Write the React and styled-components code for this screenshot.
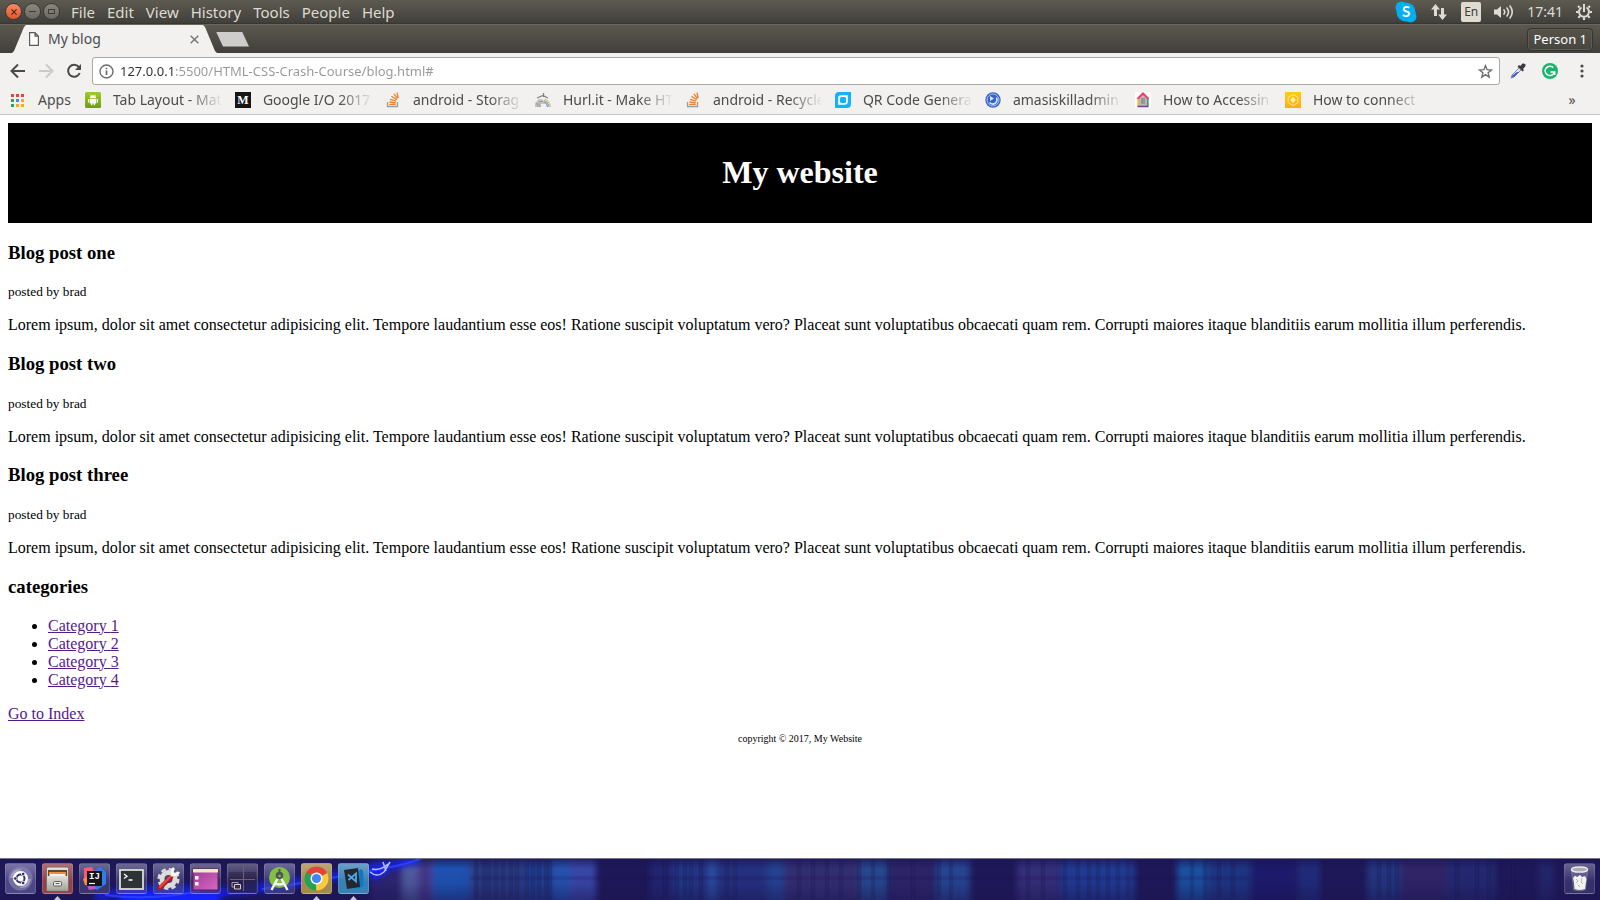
import React from "react";
import styled, { createGlobalStyle } from "styled-components";

const GlobalStyle = createGlobalStyle`
  body { margin: 0; background: #fff; }
  button { font: inherit; color: inherit; background: none; border: 0; padding: 0; margin: 0; display: flex; align-items: center; justify-content: center; }
  svg { display: block; flex: none; }
`;

const uiFont = `"Noto Sans", "Open Sans", sans-serif`;

const Desktop = styled.div`
  min-height: 100vh;
  display: flex;
  flex-direction: column;
`;

/* ---------- system bar ---------- */
const SystemBar = styled.header`
  display: flex;
  align-items: center;
  justify-content: space-between;
  box-sizing: border-box;
  height: 24px;
  padding: 0 8px 0 5px;
  background: linear-gradient(#5d5b50, #413f3b);
  border-bottom: 1px solid #37362f;
  font: 14px/22px ${uiFont};
  color: #dfdbd2;
`;

const Cluster = styled.div`
  display: flex;
  align-items: center;
  gap: ${(p) => p.$gap}px;
`;

const WindowButton = styled.button`
  width: 17px;
  height: 17px;
  box-sizing: border-box;
  border: 1px solid #3a3934;
  border-radius: 50%;
  background: ${(p) => (p.$close ? "linear-gradient(#f58b67, #e2562b)" : "linear-gradient(#8b887e, #6b6961)")};
`;

const Menu = styled.nav`
  display: flex;
  gap: 12px;
  padding-left: 9px;
  font-size: 15px;
  line-height: 20px;
`;

const Language = styled.button`
  width: 20px;
  height: 20px;
  border-radius: 2px;
  background: #dfdbd2;
  color: #3c3b37;
  font-size: 12px;
`;

/* ---------- tab strip ---------- */
const TabStrip = styled.div`
  display: flex;
  align-items: flex-end;
  box-sizing: border-box;
  height: 29px;
  padding: 0 7px 0 12px;
  background: linear-gradient(#5b584e, #413f3b);
  border-top: 1px solid #69665b;
  font-family: ${uiFont};
`;

const Tab = styled.div`
  display: flex;
  align-items: center;
  box-sizing: border-box;
  width: 205px;
  height: 28px;
  padding: 0 18px 0 17px;
  gap: 9px;
  background: #f2f1f0;
  clip-path: polygon(0 100%, 2px 26px, 12px 2px, 14px 0, 191px 0, 193px 2px, 203px 26px, 100% 100%);
  font-size: 14px;
  line-height: 28px;
  color: #4c4c4c;
`;

const TabTitle = styled.span`
  flex: 1;
`;

const NewTab = styled.button`
  align-self: center;
  width: 33px;
  height: 15px;
  margin: 0 auto 0 -1px;
  background: #cfcdcb;
  clip-path: polygon(0 0, 26px 0, 100% 100%, 7px 100%);
`;

const Profile = styled.button`
  align-self: center;
  box-sizing: border-box;
  height: 23px;
  padding: 0 5px;
  border: 1px solid #35342f;
  border-radius: 4px;
  background: linear-gradient(#56534a, #474540);
  box-shadow: inset 0 0 0 1px #5d5b52;
  font-size: 13px;
  color: #fff;
`;

/* ---------- toolbar and bookmarks ---------- */
const Chrome = styled.div`
  background: #f2f1f0;
  border-bottom: 1px solid #c9c8c7;
  font: 14px/22px ${uiFont};
  color: #4c4c4c;
`;

const Toolbar = styled.div`
  display: flex;
  align-items: center;
  height: 36px;
  padding: 0 10px;
`;

const AddressBox = styled.label`
  flex: 1;
  display: flex;
  align-items: center;
  box-sizing: border-box;
  height: 28px;
  margin: 0 10px;
  padding: 0 6px;
  gap: 6px;
  border: 1px solid #a9a8a7;
  border-radius: 3px;
  background: #fff;
`;

const Address = styled.input`
  flex: 1;
  min-width: 0;
  height: 22px;
  padding: 0;
  border: 0;
  outline: 0;
  font: 13px/22px ${uiFont};
  color: transparent;
  background: linear-gradient(90deg, #2e2e2e 56px, #979797 56px);
  background-clip: text;
`;

const Bookmarks = styled.nav`
  display: flex;
  align-items: center;
  gap: 12px;
  height: 22px;
  padding: 0 20px 3px 10px;
`;

const Bookmark = styled.a`
  display: flex;
  align-items: center;
  gap: 12px;
  color: inherit;
  text-decoration: none;
`;

const AppsLink = styled(Bookmark)`
  gap: 13px;
  margin-right: 2px;
`;

const BookmarkLabel = styled.span`
  width: 110px;
  overflow: hidden;
  white-space: nowrap;
  mask-image: linear-gradient(90deg, #000 76px, transparent 110px);
`;

const Overflow = styled.button`
  margin-left: auto;
  width: 16px;
`;

/* ---------- web page ---------- */
const Page = styled.main`
  flex: 1;
  padding: 8px;
  font-family: "Liberation Serif", serif;
  font-size: 16px;
  color: #000;
  a { color: #551a8b; }
`;

const Banner = styled.div`
  padding: 10px;
  background: #000;
  color: #fff;
  text-align: center;
  display: flow-root;
`;

const Copyright = styled.p`
  margin: 10px 0;
  font-size: 10px;
  text-align: center;
`;

/* ---------- dock ---------- */
const Dock = styled.footer`
  position: relative;
  display: flex;
  align-items: center;
  box-sizing: border-box;
  height: 42px;
  padding: 0 5px 2px;
  gap: 6px;
  border-top: 1px solid #77758c;
  background: #1e1958;
  overflow: hidden;
`;

const Wallpaper = styled.svg`
  position: absolute;
  inset: 0;
  width: 100%;
  height: 100%;
`;

const Launcher = styled.button`
  position: relative;
  width: 31px;
  height: 31px;
  margin-left: ${(p) => (p.$last ? "auto" : 0)};
  box-sizing: border-box;
  border-radius: 3px;
  border: 1px solid rgba(255, 255, 255, 0.14);
  background: linear-gradient(rgba(255, 255, 255, 0.25), transparent 60%), ${(p) => p.$tint};
`;

const RunningMark = styled.span`
  position: absolute;
  bottom: -7px;
  left: 11px;
  width: 7px;
  height: 4px;
  background: #c9c7d4;
  clip-path: polygon(50% 0, 100% 100%, 0 100%);
`;

/* ---------- icons ---------- */
const Skype = () => (
  <svg width="22" height="22" viewBox="0 0 22 22">
    <circle cx="6.500" cy="6.500" r="6" fill="#00aff0" />
    <circle cx="15.500" cy="15.500" r="6" fill="#00aff0" />
    <circle cx="11" cy="11" r="9.500" fill="#00aff0" />
    <text x="11" y="16" fontSize="15" fontWeight="700" textAnchor="middle" fill="#fff" fontFamily="Lato, sans-serif">S</text>
  </svg>
);
const Network = () => (
  <svg width="18" height="18" viewBox="0 0 18 18" fill="#dfdbd2">
    <path d="M5.500 1L10 6.500H7V13H4V6.500H1zM12.500 17L8 11.500H11V5H14V11.500H17z" />
  </svg>
);
const Sound = () => (
  <svg width="20" height="16" viewBox="0 0 20 16" fill="none" stroke="#dfdbd2" strokeWidth="1.600" strokeLinecap="round">
    <path d="M0 5.500H3L7 2V14L3 10.500H0z" fill="#dfdbd2" stroke="none" />
    <path d="M10 6Q11.500 8 10 10M13 4Q16 8 13 12M16 2Q20.500 8 16 14" />
  </svg>
);
const Gear = () => (
  <svg width="16" height="18" viewBox="0 0 16 18" fill="none" stroke="#dfdbd2">
    <path d="M5.500 4.500A5 5 0 1 0 10.500 4.500" strokeWidth="2" />
    <path d="M8 1V9" strokeWidth="2" />
    <path d="M3.600 4.500L2 3M12.400 4.500L14 3M2.500 9H0M13.500 9H16M4 13L2.300 14.700M12 13L13.700 14.700M8 14.500V17" strokeWidth="2.200" />
  </svg>
);
const FileIcon = () => (
  <svg width="10" height="14" viewBox="0 0 10 14" fill="#fff" stroke="#5a5a5a" strokeWidth="1.200">
    <path d="M.6.6H6L9.400 4.200V13.400H.6zM6 .6V4.200H9.400" />
  </svg>
);
const Cross = ({ size, color, w }) => (
  <svg width={size} height={size} viewBox="0 0 8 8" stroke={color} strokeWidth={w}>
    <path d="M.6.6L7.400 7.400M7.400.6L.6 7.400" />
  </svg>
);
const Arrow = ({ color, flip }) => (
  <svg width="16" height="16" viewBox="0 0 16 16" fill="none" stroke={color} strokeWidth="2">
    <path d={flip ? "M1 8H14M8 1.500L14.500 8L8 14.500" : "M15 8H2M8 1.500L1.500 8L8 14.500"} />
  </svg>
);
const Reload = () => (
  <svg width="16" height="16" viewBox="0 0 16 16">
    <path d="M12.800 4A6 6 0 1 0 13.700 10" fill="none" stroke="#4a4a4a" strokeWidth="2" />
    <path d="M15 1V7H9z" fill="#4a4a4a" />
  </svg>
);
const Info = () => (
  <svg width="15" height="15" viewBox="0 0 15 15" fill="none" stroke="#6c6c6c">
    <circle cx="7.500" cy="7.500" r="6.500" strokeWidth="1.400" />
    <path d="M7.500 6.500V11M7.500 3.700V5.300" strokeWidth="1.700" />
  </svg>
);
const Star = () => (
  <svg width="15" height="15" viewBox="0 0 15 15" fill="none" stroke="#6c6c6c" strokeWidth="1.400">
    <path d="M7.500 1.700L9.100 5.700L13.500 6L10.100 8.800L11.200 13.100L7.500 10.700L3.800 13.100L4.900 8.800L1.500 6L5.900 5.700z" />
  </svg>
);
const Dropper = () => (
  <svg width="16" height="16" viewBox="0 0 16 16">
    <path d="M9.500 4.500L11.500 6.500L4 14L1 15L2 12z" fill="#dfe6f7" stroke="#6c7284" strokeWidth=".8" />
    <path d="M7 9L9 9L4 13.700L1.700 14.300L2.500 12.500z" fill="#3157e0" />
    <path d="M7.500 3.500L9 2L10.200 3L12.500.6Q14 0 15.300 1.200Q16 2.500 15 3.700L13 6L14 7.200L12.500 8.500z" fill="#3b3a40" />
  </svg>
);
const Grammarly = () => (
  <svg width="16" height="16" viewBox="0 0 16 16">
    <circle cx="8" cy="8" r="8" fill="#1cb46c" />
    <path d="M11.300 4.600A4.700 4.700 0 1 0 12.300 9.500M12.700 12V9H8.500" fill="none" stroke="#fff" strokeWidth="1.500" />
  </svg>
);
const Dots = () => (
  <svg width="4" height="14" viewBox="0 0 4 14" fill="#4a4a4a">
    <circle cx="2" cy="2" r="1.600" /><circle cx="2" cy="7" r="1.600" /><circle cx="2" cy="12" r="1.600" />
  </svg>
);
const appColors = ["#ea4335", "#ea4335", "#ea4335", "#34a058", "#4285f4", "#f9ab12", "#34a058", "#f9ab12", "#f9ab12"];
const Apps = () => (
  <svg width="15" height="15" viewBox="0 0 15 15">
    {appColors.map((c, i) => (
      <rect key={i} x={1 + (i % 3) * 5} y={1 + Math.floor(i / 3) * 5} width="3" height="3" fill={c} />
    ))}
  </svg>
);
const Android = () => (
  <svg width="16" height="16" viewBox="0 0 16 16">
    <defs><linearGradient id="ag" x2="0" y2="1"><stop stopColor="#9ccb2e" /><stop offset="1" stopColor="#6f9d12" /></linearGradient></defs>
    <rect width="16" height="16" rx="1.500" fill="url(#ag)" />
    <path d="M4.800 6.300Q5 3.400 8 3.300Q11 3.400 11.200 6.300zM4.800 6.900H11.200V11.600H10V13.300H8.700V11.600H7.300V13.300H6V11.600H4.800zM3 7H4.200V10.500H3zM11.800 7H13V10.500H11.800z" fill="#fff" />
    <path d="M5.300 2.500L6.200 4M10.700 2.500L9.800 4" stroke="#fff" strokeWidth=".7" />
  </svg>
);
const Medium = () => (
  <svg width="16" height="16" viewBox="0 0 16 16">
    <rect width="16" height="16" fill="#151515" />
    <text x="8" y="12" fontSize="12" fontWeight="700" textAnchor="middle" fill="#fff" fontFamily="Liberation Serif, serif">M</text>
  </svg>
);
const Stack = () => (
  <svg width="16" height="16" viewBox="0 0 16 16" fill="none">
    <path d="M2.500 10V14.500H12.500V10" stroke="#9a9c9f" strokeWidth="1.300" />
    <path d="M4.300 12.400H10.700M4.400 10L10.800 10.800M5 7.300L11.200 9.200M6.400 4.300L11.800 7.600M8.800 1.800L12.600 6.500M12 .5L13.200 6" stroke="#f48024" strokeWidth="1.300" />
  </svg>
);
const Hurl = () => (
  <svg width="16" height="16" viewBox="0 0 16 16" fill="none">
    <path d="M0 15V11L4 7H7L10 10V12H6V15z" fill="#c4c4c4" />
    <path d="M1 12H5M2 14H6M4 9.500H8" stroke="#989898" />
    <path d="M2 6L8 3.500L13 6M8.500 1V5" stroke="#808080" strokeWidth="1.200" />
    <path d="M9.500 7Q14.500 8.500 15.500 15" stroke="#e8c07a" strokeWidth="1.200" />
    <path d="M9 8.500Q13.500 10 14 15" stroke="#84c39a" strokeWidth="1.200" />
    <path d="M9 10Q12 11 12.500 15" stroke="#8d86d8" strokeWidth="1.300" />
  </svg>
);
const Qr = () => (
  <svg width="16" height="16" viewBox="0 0 16 16">
    <path d="M4 0H16V12Q16 16 12 16H0V4Q0 0 4 0z" fill="#12b3fb" />
    <path d="M6 3.200H12.800V9.500Q12.800 12.800 9.500 12.800H3.200V6Q3.200 3.200 6 3.200z" fill="#fff" />
    <rect x="5" y="5" width="6" height="6" rx="1.500" fill="#12b3fb" />
  </svg>
);
const Globe = () => (
  <svg width="16" height="16" viewBox="0 0 16 16">
    <circle cx="8" cy="8" r="7.700" fill="#3564c6" />
    <circle cx="8" cy="8" r="6" fill="none" stroke="#a9c3f5" strokeWidth="1" />
    <path d="M5 4L9 6.500L5 9z" fill="#dbe7ff" />
    <path d="M11.500 5.500Q13 9 10 11.500Q7 13 4.500 10.500" fill="none" stroke="#dbe7ff" strokeWidth="1.600" />
  </svg>
);
const House = () => (
  <svg width="16" height="16" viewBox="0 0 16 16">
    <rect width="16" height="16" fill="#fff" />
    <path d="M4 7L8 3.500L12 7V14H4z" fill="#b8b8b8" />
    <path d="M6 7H10M6 9H10M6 11H10" stroke="#777" />
    <path d="M2.500 7L8 1.700L13.500 7" stroke="#e9406f" strokeWidth="2.300" fill="none" />
    <path d="M3.200 7V14" stroke="#f3b23b" strokeWidth="1.600" />
    <path d="M12.800 7V14" stroke="#2a9c77" strokeWidth="1.600" />
    <path d="M2.400 14.500H13.600" stroke="#7c3c98" strokeWidth="1.600" />
  </svg>
);
const Hexagon = () => (
  <svg width="16" height="16" viewBox="0 0 16 16">
    <defs><linearGradient id="hg" x2="0" y2="1"><stop stopColor="#ffcc14" /><stop offset="1" stopColor="#fcae17" /></linearGradient></defs>
    <rect width="16" height="16" fill="url(#hg)" />
    <path d="M8 2.500L12.800 5.200V10.800L8 13.500L3.200 10.800V5.200z" fill="none" stroke="#ffe795" />
    <path d="M8 5L10.800 8L8 11L5.200 8z" fill="#fff0b4" />
  </svg>
);

const Ubuntu = () => (
  <svg width="29" height="29" viewBox="0 0 29 29" fill="none">
    <circle cx="14.500" cy="14.500" r="12" fill="#8f89b5" fillOpacity=".6" />
    <path d="M4 14Q6 4 16 5Q9 8 8 14M25 15Q23 25 13 24Q20 21 21 15" fill="#c5c1dc" fillOpacity=".55" />
    <circle cx="14.500" cy="14.500" r="7.500" fill="#fff" />
    <circle cx="14.500" cy="14.500" r="4" stroke="#37316c" strokeWidth="2" />
    <g fill="#37316c" stroke="#fff" strokeWidth=".8"><circle cx="9.300" cy="14.500" r="1.800" /><circle cx="17.200" cy="10" r="1.800" /><circle cx="17.200" cy="19" r="1.800" /></g>
  </svg>
);
const Files = () => (
  <svg width="29" height="29" viewBox="0 0 29 29">
    <defs><linearGradient id="fg" x2="0" y2="1"><stop stopColor="#e2e0da" /><stop offset="1" stopColor="#a5a39d" /></linearGradient></defs>
    <rect x="3.500" y="3" width="22" height="24" rx="1.500" fill="url(#fg)" stroke="#75716b" />
    <rect x="5" y="6" width="19" height="6" fill="#69432f" />
    <path d="M6 8H23V12H6z" fill="#ef8c46" /><path d="M7 10H22V12H7z" fill="#fff3df" />
    <rect x="4" y="12" width="21" height="14.500" fill="url(#fg)" />
    <rect x="10.500" y="17.500" width="8" height="4.500" rx="1" fill="#f1f0ec" stroke="#5e5b57" /><path d="M12.500 19.500H16.500" stroke="#5e5b57" />
  </svg>
);
const IntelliJ = () => (
  <svg width="29" height="29" viewBox="0 0 29 29">
    <path d="M4 4L12 3L15 10L9 20L4 15z" fill="#fc5a72" /><path d="M3 15L10 12L11 22L5 21z" fill="#fb8c3a" />
    <path d="M14 7L20 3L26 8V20L17 26L11 22z" fill="#2b7df0" /><path d="M6 19L14 18L16 25L9 26z" fill="#c853c4" />
    <rect x="7" y="7" width="15" height="15" fill="#17151c" />
    <text x="9" y="15" fontSize="9" fontWeight="700" fill="#fff" fontFamily="Liberation Mono, monospace">IJ</text>
    <path d="M9 19.500H15" stroke="#fff" strokeWidth="1.200" />
  </svg>
);
const Terminal = () => (
  <svg width="29" height="29" viewBox="0 0 29 29">
    <rect x="3" y="6" width="23" height="19" fill="#2e3436" stroke="#dcdcd8" strokeWidth="1.800" />
    <path d="M7 10L10 12.300L7 14.600M11.500 16H15.500" fill="none" stroke="#fff" strokeWidth="1.300" />
  </svg>
);
const Settings = () => (
  <svg width="29" height="29" viewBox="0 0 29 29" fill="none">
    <circle cx="14.500" cy="15" r="9.800" stroke="#d9d8d6" strokeWidth="2.600" strokeDasharray="4.600 3.090" />
    <circle cx="14.500" cy="15" r="6.500" stroke="#dddcd9" strokeWidth="5" />
    <path d="M6 24L17 13" stroke="#b71c1c" strokeWidth="4.500" strokeLinecap="round" /><path d="M6 23L16 13" stroke="#e64a40" strokeWidth="2" strokeLinecap="round" />
    <path d="M17 12L20 9M20 4Q17 7 19 10Q22 12 25 8" stroke="#f7f7f5" strokeWidth="2.800" />
  </svg>
);
const Windows = () => (
  <svg width="29" height="29" viewBox="0 0 29 29">
    <defs><linearGradient id="wg" x2="1" y2="1"><stop stopColor="#9f3a98" /><stop offset="1" stopColor="#d667bf" /></linearGradient></defs>
    <rect x="2" y="5" width="25" height="21" fill="url(#wg)" stroke="#532055" /><path d="M2 5H27V8.500H2z" fill="#efeac9" />
    <path d="M4 12H7.500V15.500H4zM4 18H7.500V21.500H4z" fill="#fff" />
  </svg>
);
const Workspaces = () => (
  <svg width="29" height="29" viewBox="0 0 29 29" fill="none">
    <path d="M1 8H28V28H1z" fill="#191331" fillOpacity=".35" />
    <path d="M15.500 2V27M2 15.500H27" stroke="#6a6276" />
    <path d="M4 18.500H10V23H4z" stroke="#a79da6" /><path d="M6.500 20.500H12.500V25H6.500z" stroke="#d6cbd0" fill="#3a2c3d" />
  </svg>
);
const Studio = () => (
  <svg width="29" height="29" viewBox="0 0 29 29" fill="none">
    <circle cx="14.500" cy="13.500" r="10.500" fill="#84bf43" />
    <path d="M14.500 11L6.500 26M14.500 11L22.500 26M9.500 19Q14.500 22 19.500 19" stroke="#f3f3f3" strokeWidth="2.400" />
    <circle cx="14.500" cy="11.500" r="3.800" fill="#4d5754" /><circle cx="14.500" cy="12" r="1.300" fill="#84bf43" /><path d="M14.500 5V9" stroke="#4d5754" strokeWidth="2" />
  </svg>
);
const ChromeIcon = () => (
  <svg width="29" height="29" viewBox="0 0 29 29">
    <path d="M14.500 14.500L4.110 8.500A12 12 0 0 1 24.890 8.500z" fill="#e54335" />
    <path d="M14.500 14.500L24.890 8.500A12 12 0 0 1 14.500 26.500z" fill="#fcca3f" />
    <path d="M14.500 14.500L14.500 26.500A12 12 0 0 1 4.110 8.500z" fill="#23a455" />
    <path d="M14.500 9H25.200L14.500 14.500z" fill="#e54335" /><path d="M19.300 17.200L14 26.500L14.500 14.500z" fill="#fcca3f" /><path d="M9.700 17.200L4.110 8.500L14.500 14.500z" fill="#23a455" />
    <circle cx="14.500" cy="14.500" r="6" fill="#fff" /><circle cx="14.500" cy="14.500" r="4.600" fill="#4285f4" />
  </svg>
);
const Code = () => (
  <svg width="29" height="29" viewBox="0 0 29 29">
    <path d="M16 5L24 7L26 22L20 25H14z" fill="#1687d4" /><path d="M21 5L24 6.500V22L20 24z" fill="#1474bd" />
    <path d="M5 6L19 4L21 23L8 25z" fill="#25272e" />
    <path d="M9 10.500L17 17.500V9.500L9.500 16" fill="none" stroke="#48a9eb" strokeWidth="1.800" />
  </svg>
);
const Trash = () => (
  <svg width="29" height="29" viewBox="0 0 29 29">
    <path d="M6.500 6H22.500L20.500 26Q14.500 28 8.500 26z" fill="#c3c1d4" fillOpacity=".2" stroke="#dddbe4" strokeOpacity=".25" />
    <path d="M8 14L10 11.500L12 13L15 11L17 13L20 12L21.500 15L20 25Q14.500 27 9.500 25L9 19z" fill="#f1f1ee" />
    <path d="M11 15L13 17L11 19M17 14L16 18L18 20M13 21L15 23" stroke="#b9b8b8" fill="none" />
    <ellipse cx="14.500" cy="5.500" rx="8" ry="2.600" fill="#aaa8b0" stroke="#eceae6" strokeWidth="1.500" />
  </svg>
);

/* Light bands of the wallpaper: [x, width, colour, opacity] */
const bands = [
  [371, 90, "#392f80", 0.6], [402, 16, "#7290d0", 0.5], [418, 16, "#5a48a0", 0.5], [432, 40, "#1e5fc4", 0.8], [470, 56, "#2f4590", 0.75],
  [526, 28, "#2350a8", 0.7], [553, 18, "#2766cc", 0.75], [570, 26, "#3c4fb4", 0.85], [650, 24, "#25287a", 0.7],
  [674, 22, "#234a9e", 0.65], [696, 88, "#25388e", 0.75], [708, 8, "#2c70c8", 0.5], [768, 16, "#2860b0", 0.4], [784, 76, "#383679", 0.75],
  [860, 28, "#2c61ac", 0.65], [890, 44, "#30286e", 0.75], [936, 34, "#2b60b0", 0.65], [1017, 42, "#403b8c", 0.65],
  [1060, 75, "#2048a8", 0.72], [1177, 30, "#1e63b8", 0.75], [1206, 44, "#2149a0", 0.6], [1250, 46, "#201d74", 0.7],
  [1298, 22, "#203b98", 0.55], [1367, 34, "#254a98", 0.6], [1401, 46, "#362a6e", 0.75], [1446, 50, "#243684", 0.55], [1538, 16, "#243684", 0.4],
];
const slats = [
  475, 483, 488, 495, 502, 510, 516, 526, 532, 538, 545, 549, 664, 676, 684, 690, 700, 726, 734, 798, 812, 826,
  840, 858, 872, 888, 912, 938, 950, 1027, 1042, 1064, 1077, 1088, 1097, 1107, 1117, 1127, 1191, 1204, 1218, 1232, 1378, 1388, 1396, 1456, 1476, 1488, 1512,
];

const DockWallpaper = () => (
  <Wallpaper viewBox="0 0 1600 41" preserveAspectRatio="none" aria-hidden="true">
    <defs>
      <filter id="soft" x="-5%" y="-20%" width="110%" height="140%"><feGaussianBlur stdDeviation="3 1" /></filter>
      <filter id="slat" x="-5%" y="-20%" width="110%" height="140%"><feGaussianBlur stdDeviation="0.800" /></filter>
      <filter id="glow" x="-20%" y="-100%" width="140%" height="300%"><feGaussianBlur stdDeviation="3" /></filter>
      <filter id="spark" x="-20%" y="-50%" width="140%" height="200%"><feGaussianBlur stdDeviation="0.700" /></filter>
      <linearGradient id="fade" x2="0" y2="1"><stop stopColor="#1a1450" stopOpacity=".65" /><stop offset=".25" stopColor="#1a1450" stopOpacity="0" /><stop offset=".6" stopColor="#1a1450" stopOpacity=".1" /><stop offset="1" stopColor="#1a1450" stopOpacity=".5" /></linearGradient>
    </defs>
    <rect width="1600" height="41" fill="#1e1858" />
    <g filter="url(#soft)">
      {bands.map(([x, w, c, o]) => <rect key={x} x={x} y="0" width={w} height="44" fill={c} opacity={o} />)}
    </g>
    <g filter="url(#slat)">
      {slats.map((x) => <rect key={x} x={x} y="0" width="2" height="41" fill="#17124c" opacity=".5" />)}
      <rect x="470" y="18" width="780" height="2" fill="#17124c" opacity=".3" />
    </g>
    <rect width="1600" height="41" fill="url(#fade)" />
    <g fill="none" stroke="#1420ff" filter="url(#glow)">
      <path d="M95 38Q160 26 215 34Q300 26 420 0" strokeWidth="8" opacity=".8" />
      <path d="M120 40H220" strokeWidth="12" />
      <path d="M370 16L385 8" strokeWidth="12" />
    </g>
    <g fill="none" filter="url(#spark)">
      <path d="M105 36Q150 42 200 32M262 30Q330 20 385 9Q405 6 425 -2" stroke="#2d45ff" strokeWidth="2" opacity=".8" />
      <path d="M370 13Q377 19 384 13L390 3M372 10Q380 12 388 5M383 3L386 12" stroke="#b4c0ff" strokeWidth="1.500" />
    </g>
  </Wallpaper>
);

/* ---------- data ---------- */
const menus = ["File", "Edit", "View", "History", "Tools", "People", "Help"];
const bookmarks = [
  [Android, "Tab Layout - Mat"],
  [Medium, "Google I/O 2017"],
  [Stack, "android - Storag"],
  [Hurl, "Hurl.it - Make HT"],
  [Stack, "android - Recycle"],
  [Qr, "QR Code Genera"],
  [Globe, "amasiskilladmin"],
  [House, "How to Accessin"],
  [Hexagon, "How to connect"],
];
const launchers = [
  [Ubuntu, "Search", "#4d4687"],
  [Files, "Files", "#92404a", true],
  [IntelliJ, "IntelliJ IDEA", "#3c3670"],
  [Terminal, "Terminal", "rgba(90,86,140,.5)"],
  [Settings, "System Settings", "rgba(90,86,140,.5)"],
  [Windows, "Window Manager", "rgba(80,66,120,.6)"],
  [Workspaces, "Workspaces", "rgba(60,50,90,.6)"],
  [Studio, "Android Studio", "rgba(90,86,150,.5)"],
  [ChromeIcon, "Chrome", "#a58b4b", true],
  [Code, "Code", "#3980b4", true],
];
const lorem =
  "Lorem ipsum, dolor sit amet consectetur adipisicing elit. Tempore laudantium esse eos! Ratione suscipit voluptatum vero? Placeat sunt voluptatibus obcaecati quam rem. Corrupti maiores itaque blanditiis earum mollitia illum perferendis.";

export default function App() {
  return (
    <Desktop>
      <GlobalStyle />
      <SystemBar>
        <Cluster $gap={2}>
          <WindowButton $close aria-label="Close window"><Cross size={6} color="#5a2413" w={1.6} /></WindowButton>
          <WindowButton aria-label="Minimize"><svg width="7" height="7"><path d="M0 3.500H7" stroke="#3c3b37" /></svg></WindowButton>
          <WindowButton aria-label="Restore"><svg width="7" height="5"><rect x=".5" y=".5" width="6" height="4" fill="none" stroke="#3c3b37" /></svg></WindowButton>
          <Menu>
            {menus.map((m) => <button key={m}>{m}</button>)}
          </Menu>
        </Cluster>
        <Cluster $gap={13}>
          <button aria-label="Skype"><Skype /></button>
          <button aria-label="Network"><Network /></button>
          <Language>En</Language>
          <button aria-label="Sound"><Sound /></button>
          <button>17:41</button>
          <button aria-label="Session"><Gear /></button>
        </Cluster>
      </SystemBar>

      <TabStrip>
        <Tab>
          <FileIcon />
          <TabTitle>My blog</TabTitle>
          <button aria-label="Close tab"><Cross size={9} color="#777" w={1.3} /></button>
        </Tab>
        <NewTab aria-label="New tab" />
        <Profile>Person 1</Profile>
      </TabStrip>

      <Chrome>
        <Toolbar>
          <Cluster $gap={12}>
            <button aria-label="Back"><Arrow color="#4a4a4a" /></button>
            <button aria-label="Forward"><Arrow color="#cbcac9" flip /></button>
            <button aria-label="Reload"><Reload /></button>
          </Cluster>
          <AddressBox>
            <Info />
            <Address aria-label="Address" defaultValue="127.0.0.1:5500/HTML-CSS-Crash-Course/blog.html#" />
            <Star />
          </AddressBox>
          <Cluster $gap={16}>
            <button aria-label="Color picker"><Dropper /></button>
            <button aria-label="Grammarly"><Grammarly /></button>
            <Overflow aria-label="Menu"><Dots /></Overflow>
          </Cluster>
        </Toolbar>
        <Bookmarks>
          <AppsLink href="#"><Apps />Apps</AppsLink>
          {bookmarks.map(([Icon, label]) => (
            <Bookmark key={label} href="#"><Icon /><BookmarkLabel>{label}</BookmarkLabel></Bookmark>
          ))}
          <Overflow aria-label="More bookmarks">»</Overflow>
        </Bookmarks>
      </Chrome>

      <Page>
        <Banner><h1>My website</h1></Banner>
        {["one", "two", "three"].map((n) => (
          <div key={n}>
            <h3>Blog post {n}</h3>
            <small>posted by brad</small>
            <p>{lorem}</p>
          </div>
        ))}
        <h3>categories</h3>
        <ul>
          {[1, 2, 3, 4].map((n) => <li key={n}><a href="#">Category {n}</a></li>)}
        </ul>
        <a href="#">Go to Index</a>
        <Copyright>copyright © 2017, My Website</Copyright>
      </Page>

      <Dock>
        <DockWallpaper />
        {launchers.map(([Icon, label, tint, running]) => (
          <Launcher key={label} aria-label={label} $tint={tint}>
            <Icon />
            {running && <RunningMark />}
          </Launcher>
        ))}
        <Launcher aria-label="Trash" $tint="rgba(90,86,140,.4)" $last><Trash /></Launcher>
      </Dock>
    </Desktop>
  );
}
